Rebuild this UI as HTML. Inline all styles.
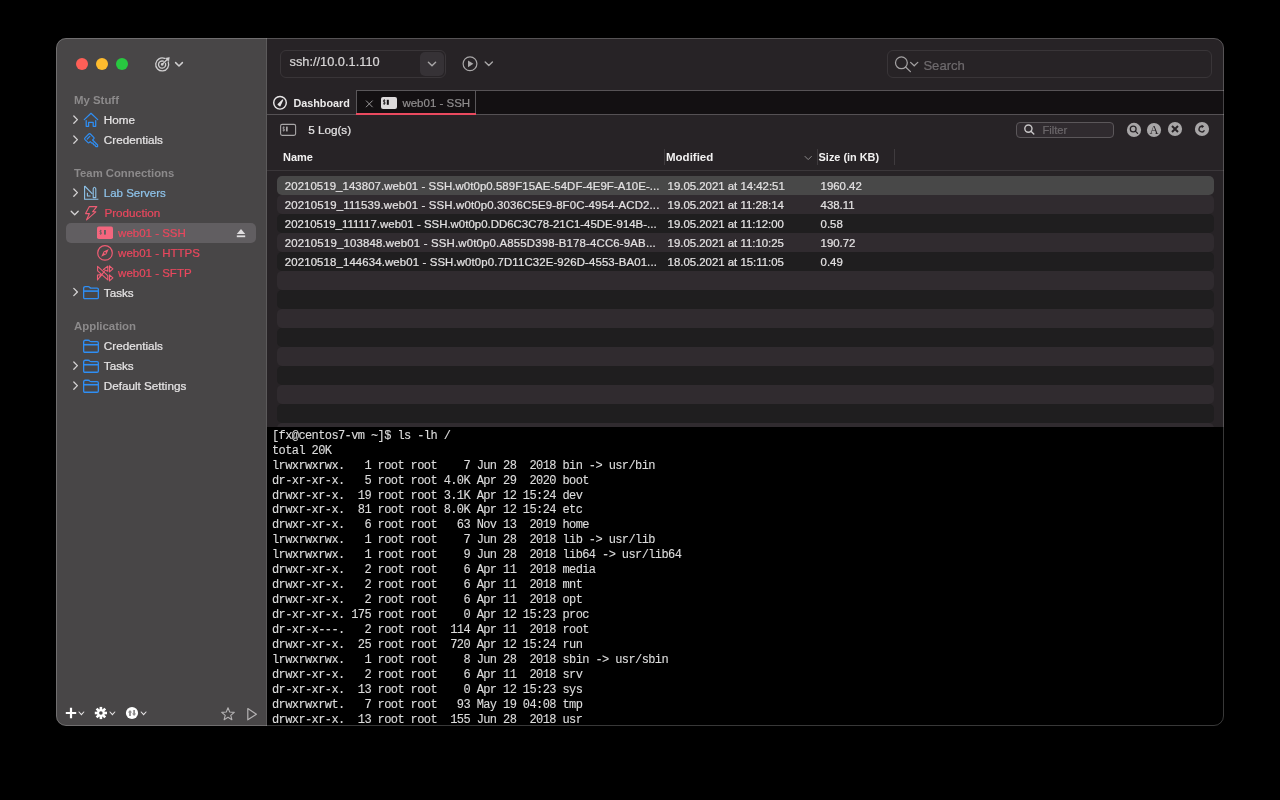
<!DOCTYPE html>
<html><head><meta charset="utf-8"><style>
*{box-sizing:border-box;margin:0;padding:0}
html,body{width:1280px;height:800px;background:#000;overflow:hidden}
body{font-family:"Liberation Sans",sans-serif;position:relative}
.a{position:absolute}
.t{position:absolute;white-space:pre;line-height:1}
#win{will-change:transform;left:0;top:0;width:1280px;height:800px;clip-path:inset(38px 56px 74px 56px round 10px)}
#frame{left:56px;top:38px;width:1168px;height:688px;border-radius:10px;border:1px solid rgba(255,255,255,.22);pointer-events:none}
svg{position:absolute;overflow:visible;left:0;top:0}
pre.term{position:absolute;left:272px;top:428.8px;font-family:"Liberation Mono",monospace;font-size:12px;letter-spacing:-0.6px;line-height:14.94px;color:#dcdcdc;-webkit-text-stroke:0.12px currentColor}
</style></head><body>
<div id="win" class="a">
<div class="a" style="left:56px;top:38px;width:210px;height:688px;background:#484647"></div>
<div class="a" style="left:266px;top:38px;width:1px;height:688px;background:#5c5a5b"></div>
<div class="a" style="left:267px;top:38px;width:957px;height:688px;background:#272326"></div>
<div class="a" style="left:356px;top:90px;width:868px;height:24px;background:#131012;border-top:1px solid #575356"></div>
<div class="a" style="left:267px;top:114px;width:957px;height:1px;background:#555154"></div>
<div class="a" style="left:356px;top:90px;width:120px;height:25px;border:1px solid #5a575a;border-bottom:none"></div>
<div class="a" style="left:356px;top:113px;width:120px;height:2px;background:#ea4a5f"></div>
<div class="a" style="left:267px;top:170px;width:957px;height:1px;background:#3b373a"></div>
<div class="t" style="left:74.00px;top:95.00px;font-size:11.4px;color:#8c8a8b;font-weight:700;">My Stuff</div>
<div class="t" style="left:103.80px;top:114.10px;font-size:11.7px;color:#e6e4e5;font-weight:400;-webkit-text-stroke:0.22px currentColor;">Home</div>
<div class="t" style="left:103.80px;top:134.10px;font-size:11.7px;color:#e6e4e5;font-weight:400;-webkit-text-stroke:0.22px currentColor;">Credentials</div>
<div class="t" style="left:74.00px;top:168.43px;font-size:11.3px;color:#8c8a8b;font-weight:700;">Team Connections</div>
<div class="t" style="left:103.80px;top:187.97px;font-size:11.5px;color:#8ec3ea;font-weight:400;-webkit-text-stroke:0.22px currentColor;">Lab Servers</div>
<div class="t" style="left:104.40px;top:207.10px;font-size:11.7px;color:#e9485e;font-weight:400;-webkit-text-stroke:0.22px currentColor;">Production</div>
<div class="a" style="left:66px;top:223px;width:190px;height:20px;border-radius:5px;background:#615e61"></div>
<div class="t" style="left:118.10px;top:227.97px;font-size:11.5px;color:#e9485e;font-weight:400;-webkit-text-stroke:0.22px currentColor;">web01 - SSH</div>
<div class="t" style="left:118.10px;top:247.97px;font-size:11.5px;color:#e9485e;font-weight:400;-webkit-text-stroke:0.22px currentColor;">web01 - HTTPS</div>
<div class="t" style="left:118.10px;top:267.97px;font-size:11.5px;color:#e9485e;font-weight:400;-webkit-text-stroke:0.22px currentColor;">web01 - SFTP</div>
<div class="t" style="left:103.80px;top:287.10px;font-size:11.7px;color:#e6e4e5;font-weight:400;-webkit-text-stroke:0.22px currentColor;">Tasks</div>
<div class="t" style="left:74.00px;top:320.85px;font-size:11.4px;color:#8c8a8b;font-weight:700;">Application</div>
<div class="t" style="left:103.80px;top:340.10px;font-size:11.7px;color:#e6e4e5;font-weight:400;-webkit-text-stroke:0.22px currentColor;">Credentials</div>
<div class="t" style="left:103.80px;top:360.10px;font-size:11.7px;color:#e6e4e5;font-weight:400;-webkit-text-stroke:0.22px currentColor;">Tasks</div>
<div class="t" style="left:103.80px;top:380.10px;font-size:11.7px;color:#e6e4e5;font-weight:400;-webkit-text-stroke:0.22px currentColor;">Default Settings</div>
<div class="a" style="left:280px;top:50px;width:166px;height:28px;border:1px solid #393538;border-radius:6px"></div>
<div class="a" style="left:420px;top:52px;width:24px;height:24px;background:#363236;border-radius:5px"></div>
<div class="t" style="left:289.50px;top:56.16px;font-size:12.8px;color:#d8d6d7;font-weight:400;-webkit-text-stroke:0.22px currentColor;">ssh://10.0.1.110</div>
<div class="a" style="left:887px;top:50px;width:325px;height:28px;border:1px solid #393538;border-radius:6px"></div>
<div class="t" style="left:923.40px;top:58.71px;font-size:13.1px;color:#6e6a6d;font-weight:400;-webkit-text-stroke:0.22px currentColor;">Search</div>
<div class="t" style="left:293.40px;top:97.86px;font-size:10.8px;color:#ecebeb;font-weight:700;">Dashboard</div>
<div class="t" style="left:402.40px;top:98.27px;font-size:11.5px;color:#8f8d8e;font-weight:400;-webkit-text-stroke:0.22px currentColor;">web01 - SSH</div>
<div class="t" style="left:308.20px;top:123.60px;font-size:11.7px;color:#e6e4e5;font-weight:400;-webkit-text-stroke:0.22px currentColor;">5 Log(s)</div>
<div class="a" style="left:1016px;top:122px;width:98px;height:16px;border:1px solid #5b575a;border-radius:4px;background:#302b2f"></div>
<div class="t" style="left:1042.40px;top:124.52px;font-size:11.2px;color:#6b676a;font-weight:400;-webkit-text-stroke:0.22px currentColor;">Filter</div>
<div class="t" style="left:283.00px;top:151.69px;font-size:11px;color:#f2f1f1;font-weight:700;">Name</div>
<div class="a" style="left:664px;top:149px;width:1px;height:16px;background:#3f3b3e"></div>
<div class="t" style="left:666.00px;top:152.47px;font-size:11.5px;color:#f2f1f1;font-weight:700;">Modified</div>
<div class="a" style="left:817px;top:149px;width:1px;height:16px;background:#3f3b3e"></div>
<div class="t" style="left:818.60px;top:151.77px;font-size:10.9px;color:#f2f1f1;font-weight:700;">Size (in KB)</div>
<div class="a" style="left:894px;top:149px;width:1px;height:16px;background:#3f3b3e"></div>
<div class="a" style="left:277px;top:176px;width:937px;height:19px;border-radius:5px;background:#484848"></div>
<div class="a" style="left:277px;top:195px;width:937px;height:19px;border-radius:5px;background:#302b2f"></div>
<div class="a" style="left:277px;top:214px;width:937px;height:19px;border-radius:5px;background:#1f1e1f"></div>
<div class="a" style="left:277px;top:233px;width:937px;height:19px;border-radius:5px;background:#302b2f"></div>
<div class="a" style="left:277px;top:252px;width:937px;height:19px;border-radius:5px;background:#1f1e1f"></div>
<div class="a" style="left:277px;top:271px;width:937px;height:19px;border-radius:5px;background:#302b2f"></div>
<div class="a" style="left:277px;top:290px;width:937px;height:19px;border-radius:5px;background:#1f1e1f"></div>
<div class="a" style="left:277px;top:309px;width:937px;height:19px;border-radius:5px;background:#302b2f"></div>
<div class="a" style="left:277px;top:328px;width:937px;height:19px;border-radius:5px;background:#1f1e1f"></div>
<div class="a" style="left:277px;top:347px;width:937px;height:19px;border-radius:5px;background:#302b2f"></div>
<div class="a" style="left:277px;top:366px;width:937px;height:19px;border-radius:5px;background:#1f1e1f"></div>
<div class="a" style="left:277px;top:385px;width:937px;height:19px;border-radius:5px;background:#302b2f"></div>
<div class="a" style="left:277px;top:404px;width:937px;height:19px;border-radius:5px;background:#1f1e1f"></div>
<div class="a" style="left:277px;top:423px;width:937px;height:19px;border-radius:5px;background:#302b2f"></div>
<div class="t" style="left:284.80px;top:180.85px;font-size:11.4px;color:#e3e1e2;font-weight:400;-webkit-text-stroke:0.22px currentColor;letter-spacing:0.08px">20210519_143807.web01 - SSH.w0t0p0.589F15AE-54DF-4E9F-A10E-...</div>
<div class="t" style="left:667.60px;top:180.85px;font-size:11.4px;color:#e3e1e2;font-weight:400;-webkit-text-stroke:0.22px currentColor;">19.05.2021 at 14:42:51</div>
<div class="t" style="left:820.60px;top:180.85px;font-size:11.4px;color:#e3e1e2;font-weight:400;-webkit-text-stroke:0.22px currentColor;">1960.42</div>
<div class="t" style="left:284.80px;top:199.85px;font-size:11.4px;color:#e3e1e2;font-weight:400;-webkit-text-stroke:0.22px currentColor;letter-spacing:0.16px">20210519_111539.web01 - SSH.w0t0p0.3036C5E9-8F0C-4954-ACD2...</div>
<div class="t" style="left:667.60px;top:199.85px;font-size:11.4px;color:#e3e1e2;font-weight:400;-webkit-text-stroke:0.22px currentColor;">19.05.2021 at 11:28:14</div>
<div class="t" style="left:820.60px;top:199.85px;font-size:11.4px;color:#e3e1e2;font-weight:400;-webkit-text-stroke:0.22px currentColor;">438.11</div>
<div class="t" style="left:284.80px;top:218.85px;font-size:11.4px;color:#e3e1e2;font-weight:400;-webkit-text-stroke:0.22px currentColor;letter-spacing:0.026px">20210519_111117.web01 - SSH.w0t0p0.DD6C3C78-21C1-45DE-914B-...</div>
<div class="t" style="left:667.60px;top:218.85px;font-size:11.4px;color:#e3e1e2;font-weight:400;-webkit-text-stroke:0.22px currentColor;">19.05.2021 at 11:12:00</div>
<div class="t" style="left:820.60px;top:218.85px;font-size:11.4px;color:#e3e1e2;font-weight:400;-webkit-text-stroke:0.22px currentColor;">0.58</div>
<div class="t" style="left:284.80px;top:237.85px;font-size:11.4px;color:#e3e1e2;font-weight:400;-webkit-text-stroke:0.22px currentColor;letter-spacing:0.18px">20210519_103848.web01 - SSH.w0t0p0.A855D398-B178-4CC6-9AB...</div>
<div class="t" style="left:667.60px;top:237.85px;font-size:11.4px;color:#e3e1e2;font-weight:400;-webkit-text-stroke:0.22px currentColor;">19.05.2021 at 11:10:25</div>
<div class="t" style="left:820.60px;top:237.85px;font-size:11.4px;color:#e3e1e2;font-weight:400;-webkit-text-stroke:0.22px currentColor;">190.72</div>
<div class="t" style="left:284.80px;top:256.85px;font-size:11.4px;color:#e3e1e2;font-weight:400;-webkit-text-stroke:0.22px currentColor;letter-spacing:0.125px">20210518_144634.web01 - SSH.w0t0p0.7D11C32E-926D-4553-BA01...</div>
<div class="t" style="left:667.60px;top:256.85px;font-size:11.4px;color:#e3e1e2;font-weight:400;-webkit-text-stroke:0.22px currentColor;">18.05.2021 at 15:11:05</div>
<div class="t" style="left:820.60px;top:256.85px;font-size:11.4px;color:#e3e1e2;font-weight:400;-webkit-text-stroke:0.22px currentColor;">0.49</div>
<div class="a" style="left:267px;top:427px;width:957px;height:299px;background:#000"></div>
<pre class="term">[fx@centos7-vm ~]$ ls -lh /
total 20K
lrwxrwxrwx.   1 root root    7 Jun 28  2018 bin -&gt; usr/bin
dr-xr-xr-x.   5 root root 4.0K Apr 29  2020 boot
drwxr-xr-x.  19 root root 3.1K Apr 12 15:24 dev
drwxr-xr-x.  81 root root 8.0K Apr 12 15:24 etc
drwxr-xr-x.   6 root root   63 Nov 13  2019 home
lrwxrwxrwx.   1 root root    7 Jun 28  2018 lib -&gt; usr/lib
lrwxrwxrwx.   1 root root    9 Jun 28  2018 lib64 -&gt; usr/lib64
drwxr-xr-x.   2 root root    6 Apr 11  2018 media
drwxr-xr-x.   2 root root    6 Apr 11  2018 mnt
drwxr-xr-x.   2 root root    6 Apr 11  2018 opt
dr-xr-xr-x. 175 root root    0 Apr 12 15:23 proc
dr-xr-x---.   2 root root  114 Apr 11  2018 root
drwxr-xr-x.  25 root root  720 Apr 12 15:24 run
lrwxrwxrwx.   1 root root    8 Jun 28  2018 sbin -&gt; usr/sbin
drwxr-xr-x.   2 root root    6 Apr 11  2018 srv
dr-xr-xr-x.  13 root root    0 Apr 12 15:23 sys
drwxrwxrwt.   7 root root   93 May 19 04:08 tmp
drwxr-xr-x.  13 root root  155 Jun 28  2018 usr</pre>
<svg width="1280" height="800" viewBox="0 0 1280 800"><circle cx="82" cy="64" r="6" fill="#fe5f57"/>
<circle cx="102" cy="64" r="6" fill="#febc2e"/>
<circle cx="122" cy="64" r="6" fill="#28c840"/>
<g transform="translate(0,0.6)"><g fill="none" stroke="#d0cfd0" stroke-width="1.3" stroke-linecap="round"><path d="M168.3,61.6 A6.5,6.5 0 1 1 164.6,57.8"/><path d="M165.5,62.8 A3.6,3.6 0 1 1 163.3,60.6"/><path d="M162.2,63.8 L166.6,59.4"/></g><circle cx="162.2" cy="63.8" r="1.3" fill="#d0cfd0"/><path d="M165.4,57.6 L169.4,56.8 L168.6,60.8 Z" fill="#d0cfd0" stroke="#d0cfd0" stroke-width="0.5" stroke-linejoin="round"/></g>
<path d="M175.6,62.6 L179,66 L182.4,62.6" fill="none" stroke="#d0cfd0" stroke-width="1.5" stroke-linecap="round" stroke-linejoin="round"/>
<path d="M73.8,116.0 L77.4,119.6 L73.8,123.19999999999999" fill="none" stroke="#d4d2d3" stroke-width="1.3" stroke-linecap="round" stroke-linejoin="round"/>
<path d="M73.8,136.0 L77.4,139.6 L73.8,143.2" fill="none" stroke="#d4d2d3" stroke-width="1.3" stroke-linecap="round" stroke-linejoin="round"/>
<path d="M73.8,189.0 L77.4,192.6 L73.8,196.2" fill="none" stroke="#d4d2d3" stroke-width="1.3" stroke-linecap="round" stroke-linejoin="round"/>
<path d="M73.8,288.4 L77.4,292 L73.8,295.6" fill="none" stroke="#d4d2d3" stroke-width="1.3" stroke-linecap="round" stroke-linejoin="round"/>
<path d="M73.8,362.0 L77.4,365.6 L73.8,369.20000000000005" fill="none" stroke="#d4d2d3" stroke-width="1.3" stroke-linecap="round" stroke-linejoin="round"/>
<path d="M73.8,382.0 L77.4,385.6 L73.8,389.20000000000005" fill="none" stroke="#d4d2d3" stroke-width="1.3" stroke-linecap="round" stroke-linejoin="round"/>
<path d="M71.2,211.2 L74.7,214.8 L78.2,211.2" fill="none" stroke="#d4d2d3" stroke-width="1.3" stroke-linecap="round" stroke-linejoin="round"/>
<g fill="none" stroke="#2f8ef4" stroke-width="1.25" stroke-linecap="round" stroke-linejoin="round"><path d="M84.3,119.6 L91,113.3 L97.7,119.6"/><path d="M86.2,120.6 V126.3 H88.6 V122.4 H93.2 V126.3 H95.7 V120.6"/></g>
<g fill="none" stroke="#2f8ef4" stroke-width="1.2" stroke-linecap="round" stroke-linejoin="round"><path d="M85,137.8 L88.8,134 Q89.6,133.2 90.4,134 L93.7,137.3 Q94.5,138.1 93.7,138.9 L92.6,140 L97.6,145 L97.6,146.6 L96,146.6 L95.2,145.8 L95.2,145 L94.2,145 L93.2,144 L93.2,143.2 L91.8,143.2 L90.2,141.6 L89.4,142.4 Q88.6,143.2 87.8,142.4 L85,139.6 Q84.2,138.6 85,137.8 Z"/><path d="M87.2,139 L89.8,136.4"/></g>
<g fill="none" stroke="#8ec3ea" stroke-width="1.1" stroke-linejoin="round"><path d="M84.6,186 V199.3 H98.4"/><path d="M84.6,186 L92.4,193.8"/><path d="M87.4,192.8 V196 H90.6"/><path d="M93.2,197.6 V188.8 Q94.4,185.8 95.8,188.8 V197.6 Z"/></g>
<path d="M89.4,206.6 L96.8,206.6 L92.6,211.8 L95.8,211.8 L86.6,219.8 L89.4,213.6 L85.6,213.6 Z" fill="none" stroke="#ef5d74" stroke-width="1.1" stroke-linejoin="round"/>
<rect x="97" y="226.6" width="16" height="12.4" rx="1.8" fill="#f4667e"/><g transform="translate(99.4,229.8) scale(0.96)" fill="none" stroke="#615e61" stroke-width="0.78"><path d="M2.3,1.1 Q1.9,0.7 1.2,0.8 Q0.3,0.9 0.4,1.7 Q0.5,2.3 1.3,2.5 Q2.3,2.8 2.3,3.5 Q2.3,4.3 1.3,4.3 Q0.6,4.3 0.2,3.9"/><path d="M1.3,0 V5.1"/></g><rect x="104" y="230" width="1.9" height="4.6" fill="#615e61"/>
<path d="M236.8,234 L241,229 L245.2,234 Z" fill="#e0dee0"/><rect x="236.8" y="235.4" width="8.4" height="1.8" fill="#e0dee0"/>
<circle cx="105" cy="252.9" r="7.3" fill="none" stroke="#ef5d74" stroke-width="1.2"/><path d="M101.2,256.8 L103.6,251.6 L108.8,249.1 L106.4,254.3 Z" fill="#ef5d74"/><circle cx="105" cy="252.9" r="0.9" fill="#484647"/>
<g fill="none" stroke="#ef5d74" stroke-width="1.1" stroke-linejoin="round"><path d="M97.6,266.4 L107.8,275.6 L107.8,279.9 L97.6,270.8 Z"/><path d="M99.8,277.2 L104.6,271.2"/><path d="M103.4,269.4 L107.8,266.2 L107.8,271.2 Z"/><path d="M109.5,265.8 L112.9,268.8 L109.5,271.8 Z"/><path d="M97.5,275 L101.6,274.6 L97.5,280 Z"/><path d="M109.5,274.8 L112.9,277.8 L109.5,280.8 Z"/></g>
<g fill="none" stroke="#2f8ef4" stroke-width="1.3" stroke-linejoin="round" transform="translate(83,286)"><path d="M0.65,11.4 V2.3 Q0.65,0.65 2.3,0.65 H5.2 Q6.2,0.65 6.8,1.5 Q7.3,2.1 8.2,2.1 H14.2 Q15.35,2.1 15.35,3.3 V11.4 Q15.35,12.65 14.1,12.65 H1.9 Q0.65,12.65 0.65,11.4 Z"/><path d="M0.65,5.1 H15.35" stroke-width="1.6"/></g>
<g fill="none" stroke="#2f8ef4" stroke-width="1.3" stroke-linejoin="round" transform="translate(83,339.6)"><path d="M0.65,11.4 V2.3 Q0.65,0.65 2.3,0.65 H5.2 Q6.2,0.65 6.8,1.5 Q7.3,2.1 8.2,2.1 H14.2 Q15.35,2.1 15.35,3.3 V11.4 Q15.35,12.65 14.1,12.65 H1.9 Q0.65,12.65 0.65,11.4 Z"/><path d="M0.65,5.1 H15.35" stroke-width="1.6"/></g>
<g fill="none" stroke="#2f8ef4" stroke-width="1.3" stroke-linejoin="round" transform="translate(83,359.6)"><path d="M0.65,11.4 V2.3 Q0.65,0.65 2.3,0.65 H5.2 Q6.2,0.65 6.8,1.5 Q7.3,2.1 8.2,2.1 H14.2 Q15.35,2.1 15.35,3.3 V11.4 Q15.35,12.65 14.1,12.65 H1.9 Q0.65,12.65 0.65,11.4 Z"/><path d="M0.65,5.1 H15.35" stroke-width="1.6"/></g>
<g fill="none" stroke="#2f8ef4" stroke-width="1.3" stroke-linejoin="round" transform="translate(83,379.6)"><path d="M0.65,11.4 V2.3 Q0.65,0.65 2.3,0.65 H5.2 Q6.2,0.65 6.8,1.5 Q7.3,2.1 8.2,2.1 H14.2 Q15.35,2.1 15.35,3.3 V11.4 Q15.35,12.65 14.1,12.65 H1.9 Q0.65,12.65 0.65,11.4 Z"/><path d="M0.65,5.1 H15.35" stroke-width="1.6"/></g>
<path d="M71,707.8 V718.2 M65.8,713 H76.2" stroke="#fff" stroke-width="2.2" fill="none"/>
<path d="M79,712 L81.4,714.6 L83.8,712" fill="none" stroke="#e6e4e5" stroke-width="1.1" stroke-linecap="round"/>
<g transform="translate(100.9,713)"><rect x="-1.3" y="-6.1" width="2.6" height="3.2" transform="rotate(0)" fill="#fff"/><rect x="-1.3" y="-6.1" width="2.6" height="3.2" transform="rotate(45)" fill="#fff"/><rect x="-1.3" y="-6.1" width="2.6" height="3.2" transform="rotate(90)" fill="#fff"/><rect x="-1.3" y="-6.1" width="2.6" height="3.2" transform="rotate(135)" fill="#fff"/><rect x="-1.3" y="-6.1" width="2.6" height="3.2" transform="rotate(180)" fill="#fff"/><rect x="-1.3" y="-6.1" width="2.6" height="3.2" transform="rotate(225)" fill="#fff"/><rect x="-1.3" y="-6.1" width="2.6" height="3.2" transform="rotate(270)" fill="#fff"/><rect x="-1.3" y="-6.1" width="2.6" height="3.2" transform="rotate(315)" fill="#fff"/><circle r="3.8" fill="#fff"/><circle r="1.8" fill="#484647"/></g>
<path d="M110,712 L112.4,714.6 L114.8,712" fill="none" stroke="#e6e4e5" stroke-width="1.1" stroke-linecap="round"/>
<circle cx="132" cy="713" r="6.1" fill="#fff"/><path d="M130,716 V711.6" stroke="#8e8c8d" stroke-width="1.8" fill="none"/><path d="M127.9,712.6 L130,710 L132.1,712.6 Z" fill="#8e8c8d"/><path d="M134.1,710 V714.4" stroke="#8e8c8d" stroke-width="1.8" fill="none"/><path d="M132,713.4 L134.1,716 L136.2,713.4 Z" fill="#8e8c8d"/>
<path d="M141.2,712 L143.6,714.6 L146,712" fill="none" stroke="#e6e4e5" stroke-width="1.1" stroke-linecap="round"/>
<polygon points="228.00,707.80 229.70,712.05 234.28,712.36 230.76,715.30 231.88,719.74 228.00,717.30 224.12,719.74 225.24,715.30 221.72,712.36 226.30,712.05" fill="none" stroke="#b4b2b3" stroke-width="1.1" stroke-linejoin="round"/>
<path d="M247.8,708.6 L256.4,714.2 L247.8,719.8 Z" fill="none" stroke="#b4b2b3" stroke-width="1.2" stroke-linejoin="round"/>
<path d="M428.4,62.2 L432,65.8 L435.6,62.2" fill="none" stroke="#a9a7a8" stroke-width="1.4" stroke-linecap="round" stroke-linejoin="round"/>
<circle cx="470" cy="63.8" r="6.9" fill="none" stroke="#a9a7a8" stroke-width="1.2"/><path d="M468,60.4 L473.4,63.8 L468,67.2 Z" fill="#a9a7a8"/>
<path d="M485.2,62 L488.8,65.4 L492.4,62" fill="none" stroke="#a9a7a8" stroke-width="1.4" stroke-linecap="round" stroke-linejoin="round"/>
<g fill="none" stroke="#a3a1a2" stroke-width="1.25" stroke-linecap="round"><circle cx="901.4" cy="62.8" r="5.9"/><path d="M905.6,67 L910.4,71.6"/><path d="M910.6,62.4 L914.2,65.8 L917.8,62.4"/></g>
<circle cx="280" cy="102.8" r="6.3" fill="none" stroke="#e8e6e7" stroke-width="1.45"/><path d="M278.1,104.5 L282.7,100 L279.9,105.9 Z" fill="#e8e6e7" stroke="#e8e6e7" stroke-width="1.1" stroke-linejoin="round"/>
<path d="M366,100.6 L372.6,107.2 M372.6,100.6 L366,107.2" stroke="#9b999a" stroke-width="1" fill="none"/>
<rect x="381" y="97" width="16" height="12" rx="2" fill="#dcdadb"/><g transform="translate(382.9,99.4) scale(1.04)" fill="none" stroke="#131012" stroke-width="0.77"><path d="M2.3,1.1 Q1.9,0.7 1.2,0.8 Q0.3,0.9 0.4,1.7 Q0.5,2.3 1.3,2.5 Q2.3,2.8 2.3,3.5 Q2.3,4.3 1.3,4.3 Q0.6,4.3 0.2,3.9"/><path d="M1.3,0 V5.1"/></g><rect x="386.8" y="99.8" width="2" height="5" fill="#131012"/>
<rect x="280.6" y="124.4" width="15" height="11" rx="1.6" fill="none" stroke="#a8a6a7" stroke-width="1.1"/><g transform="translate(282.4,126.4) scale(1.0)" fill="none" stroke="#a8a6a7" stroke-width="0.75"><path d="M2.3,1.1 Q1.9,0.7 1.2,0.8 Q0.3,0.9 0.4,1.7 Q0.5,2.3 1.3,2.5 Q2.3,2.8 2.3,3.5 Q2.3,4.3 1.3,4.3 Q0.6,4.3 0.2,3.9"/><path d="M1.3,0 V5.1"/></g><rect x="286" y="126.6" width="1.7" height="4.8" fill="#a8a6a7"/>
<g fill="none" stroke="#c8c6c7" stroke-width="1.4" stroke-linecap="round"><circle cx="1028.4" cy="128.6" r="3.6"/><path d="M1031,131.2 L1033.8,134"/></g>
<circle cx="1134" cy="129.9" r="7.1" fill="#a8a6a7"/>
<circle cx="1154" cy="130" r="7.1" fill="#a8a6a7"/>
<circle cx="1175" cy="129" r="7.1" fill="#a8a6a7"/>
<circle cx="1202" cy="129" r="7.1" fill="#a8a6a7"/>
<g fill="none" stroke="#272326" stroke-width="1.3" stroke-linecap="round"><circle cx="1133.2" cy="129" r="2.9"/><path d="M1135.3,131.1 L1137.6,133.4"/></g>
<text x="1154" y="134.3" text-anchor="middle" font-family="Liberation Serif" font-size="12.6" fill="#272326">A</text>
<path d="M1172,126 L1178,132 M1178,126 L1172,132" stroke="#272326" stroke-width="2" fill="none"/>
<path d="M1204.4,130.2 A2.8,2.8 0 1 1 1202.6,126.4" fill="none" stroke="#272326" stroke-width="1.3"/><path d="M1201.6,124.8 L1204.2,126.2 L1201.8,128.2 Z" fill="#272326"/>
<path d="M805,156.4 L808.2,159.6 L811.4,156.4" fill="none" stroke="#8b898a" stroke-width="1" stroke-linecap="round"/></svg>
</div>
<div id="frame" class="a"></div>
</body></html>
